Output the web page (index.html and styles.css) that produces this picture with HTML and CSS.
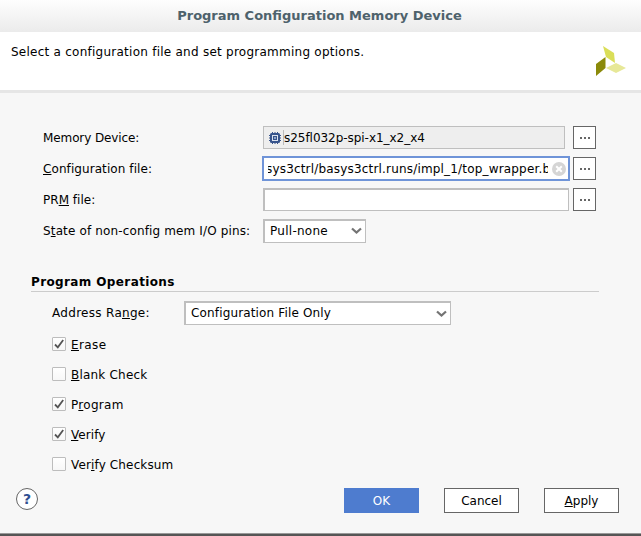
FILE: index.html
```html
<!DOCTYPE html>
<html lang="en">
<head>
<meta charset="utf-8">
<title>Program Configuration Memory Device</title>
<link rel="stylesheet" href="styles.css">
</head>
<body>
<div class="dialog">
  <header class="titlebar"><h1>Program Configuration Memory Device</h1></header>
  <div class="banner">
    <p class="t-intro">Select a configuration file and set programming options.</p>
    <svg class="logo" width="31" height="31" viewBox="0 0 31 31">
      <path d="M7 0 18 7 19 17 10 11Z" fill="#dade58"/>
      <path d="M0 18 9.5 11V22L0 30Z" fill="#8b8a0a"/>
      <path d="M10 22 20 17 30 22 20 27Z" fill="#e7e898"/>
    </svg>
  </div>
  <main class="content">
    <div class="row">
      <label class="label t-memory">Memory Device:</label>
      <div class="field device">
        <svg width="12" height="12" viewBox="0 0 12 12">
          <path d="M3.5 0V12M6 0V12M8.5 0V12M0 3.5H12M0 6H12M0 8.5H12" stroke="#37548c" fill="none"/>
          <rect x="1" y="1" width="10" height="10" rx="1.5" fill="#37548c"/>
          <rect x="3.5" y="3.5" width="5" height="5" fill="#37548c" stroke="#dce3ef"/>
          <rect x="5" y="5" width="2" height="2" fill="#8fa5ca"/>
        </svg>
        <span class="device-name">s25fl032p-spi-x1_x2_x4</span>
      </div>
      <button class="browse"><i></i><i></i><i></i></button>
    </div>
    <div class="row">
      <label class="label t-config"><u>C</u>onfiguration file:</label>
      <div class="field path">
        <div class="path-view"><span class="t-path">sys3ctrl/basys3ctrl.runs/impl_1/top_wrapper.b</span></div>
        <svg width="14" height="14" viewBox="0 0 14 14"><circle cx="7" cy="7" r="7" fill="#d5d5d5"/><path d="M4.2 4.2 9.8 9.8M9.8 4.2 4.2 9.8" stroke="#fff" stroke-width="2"/></svg>
      </div>
      <button class="browse"><i></i><i></i><i></i></button>
    </div>
    <div class="row">
      <label class="label t-prm">PR<u>M</u> file:</label>
      <div class="field prm"></div>
      <button class="browse"><i></i><i></i><i></i></button>
    </div>
    <div class="row">
      <label class="label t-state">S<u>t</u>ate of non-config mem I/O pins:</label>
      <div class="select pins"><span class="t-pull">Pull-none</span><svg width="11" height="8" viewBox="0 0 11 8"><path d="M1 1.5 5.5 5.5 10 1.5" stroke="#747474" stroke-width="2.3" fill="none"/></svg></div>
    </div>
    <h2 class="section">Program Operations</h2>
    <div class="operations">
      <div class="range">
        <label class="t-range">Address Ra<u>n</u>ge:</label>
        <div class="select address"><span class="t-only">Configuration File Only</span><svg width="11" height="8" viewBox="0 0 11 8"><path d="M1 1.5 5.5 5.5 10 1.5" stroke="#747474" stroke-width="2.3" fill="none"/></svg></div>
      </div>
      <div class="check"><span class="box"><svg width="12" height="12" viewBox="0 0 12 12"><path d="M2 6.5 4.8 9.3 10.2 2" stroke="#555" stroke-width="1.8" fill="none"/></svg></span><span class="t-erase"><u>E</u>rase</span></div>
      <div class="check"><span class="box"></span><span class="t-blank"><u>B</u>lank Check</span></div>
      <div class="check"><span class="box"><svg width="12" height="12" viewBox="0 0 12 12"><path d="M2 6.5 4.8 9.3 10.2 2" stroke="#555" stroke-width="1.8" fill="none"/></svg></span><span class="t-program">P<u>r</u>ogram</span></div>
      <div class="check"><span class="box"><svg width="12" height="12" viewBox="0 0 12 12"><path d="M2 6.5 4.8 9.3 10.2 2" stroke="#555" stroke-width="1.8" fill="none"/></svg></span><span class="t-config"><u>V</u>erify</span></div>
      <div class="check"><span class="box"></span><span class="t-state">Ver<u>i</u>fy Checksum</span></div>
    </div>
  </main>
  <footer class="actions">
    <button class="help">?</button>
    <button class="btn primary">OK</button>
    <button class="btn">Cancel</button>
    <button class="btn"><u>A</u>pply</button>
  </footer>
</div>
</body>
</html>
```
FILE: styles.css
```css
* { box-sizing: border-box; }
body {
  margin: 0;
  height: 536px;
  overflow: hidden;
  background: #555;
  font: 12px/16px "DejaVu Sans", sans-serif;
  color: #000;
}
h1, h2, p { margin: 0; font-size: 12px; }
button { font: inherit; color: inherit; padding: 0; border-radius: 0; }
svg { display: block; flex: none; }
span, label, p { white-space: nowrap; }
u { text-decoration: underline 1px; text-underline-offset: 1px; text-decoration-skip-ink: none; }

.dialog { height: 534px; background: #f7f7f7; border-bottom: 1px solid #999; display: flex; flex-direction: column; }
.titlebar { height: 32px; background: linear-gradient(#fefefe, #ebebeb); text-align: center; color: #4e626c; padding-top: 7px; }
.titlebar h1 { font-size: 13px; line-height: 17px; margin-right: 2px; }
.banner { height: 61px; background: #fff; border-bottom: 3px solid #e6e6e6; display: flex; justify-content: space-between; padding: 12px 14px 0 11px; }
.logo { margin-top: 2px; }

.content { padding: 29px 42px 0 43px; }
.row { height: 31px; display: flex; align-items: center; }
.label { width: 220px; flex: none; }
.field { height: 23px; border: 1px solid #bfbfbf; background: #fff; flex: none; }
.device { width: 302px; background: #eee; display: flex; align-items: center; padding-left: 5px; }
.device-name { border-left: 1px solid #bbb; margin-left: 2px; height: 15px; line-height: 17px; letter-spacing: -.04px; }
.path { width: 308px; height: 25px; margin: 0 -1px; border: 2px solid #6f94d8; display: flex; align-items: center; gap: 4px; padding-left: 4px; }
.path-view { width: 280px; overflow: hidden; display: flex; flex: none; }
.t-path { letter-spacing: .18px; margin-left: -2px; }
.prm { width: 306px; border-top-width: 2px; border-left-width: 2px; }
.browse { width: 23px; height: 23px; margin: 0 3px 0 auto; border: 1px solid #666; background: #fff; display: flex; align-items: center; justify-content: center; gap: 2px; }
.browse i { width: 2px; height: 2px; background: #666; }
.select { height: 24px; border: 1px solid #bfbfbf; border-top-width: 2px; border-left-width: 2px; background: #fff; display: flex; align-items: center; justify-content: space-between; padding: 0 3px 0 5px; }
.pins { width: 103px; }
.address { width: 267px; }

.t-intro { letter-spacing: .25px; }
.t-memory { letter-spacing: -.1px; }
.t-prm { letter-spacing: .02px; }
.t-config { letter-spacing: .08px; }
.t-state { letter-spacing: .14px; }
.t-pull { letter-spacing: .27px; }
.t-range { letter-spacing: .3px; }
.t-only { letter-spacing: .15px; }
.t-erase { letter-spacing: .4px; }
.t-blank { letter-spacing: .2px; }
.t-program { letter-spacing: .3px; }

.section { margin: 27px 0 0 -12px; width: 568px; height: 19px; border-bottom: 1px solid #ccc; line-height: 18px; letter-spacing: .38px; }
.operations { padding: 9px 0 0 9px; }
.range { display: flex; align-items: center; height: 24px; margin-bottom: 4px; }
.range label { width: 132px; }
.range .select span { margin-top: -2px; }
.check { height: 30px; display: flex; align-items: center; gap: 5px; }
.check > span:last-child { line-height: 18px; padding-top: 1px; }
.box { width: 14px; height: 14px; border: 1px solid #bdbdbd; border-radius: 1px; background: linear-gradient(#fff, #f7f7f7); }

.actions { margin-top: auto; height: 45px; display: flex; gap: 25px; padding-left: 16px; padding-right: 22px; align-items: flex-start; }
.help { width: 22px; height: 22px; border: 1px solid #666; border-radius: 50%; background: #fff; color: #304f91; font: bold 14px/20px "DejaVu Sans", sans-serif; margin-right: auto; }
.btn { width: 75px; height: 25px; border: 1px solid #666; background: #fff; }
.primary { background: #4e7ccf; border-color: #4e7ccf; color: #fff; }
```
